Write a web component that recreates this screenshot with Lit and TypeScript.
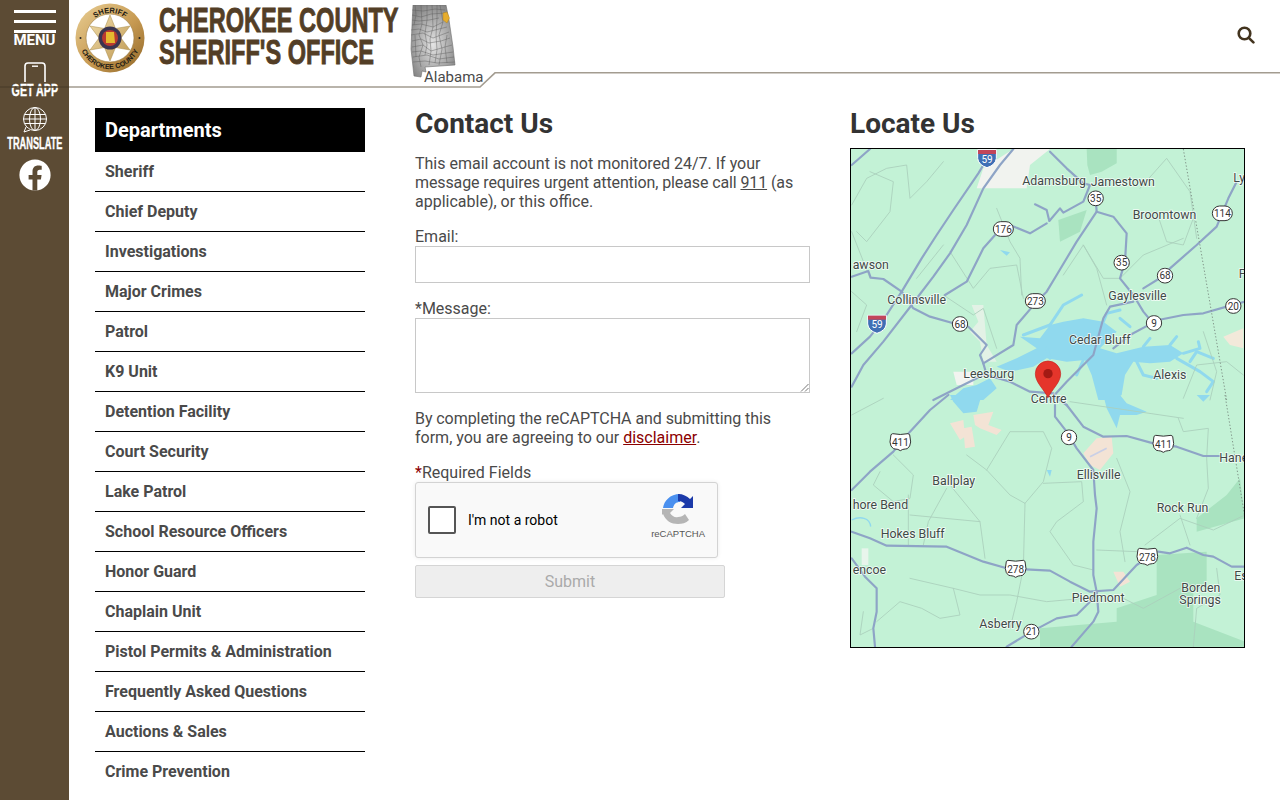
import { LitElement, html, css, svg } from "lit";
import { customElement } from "lit/decorators.js";

const depts = ["Sheriff","Chief Deputy","Investigations","Major Crimes","Patrol","K9 Unit","Detention Facility","Court Security","Lake Patrol","School Resource Officers","Honor Guard","Chaplain Unit","Pistol Permits & Administration","Frequently Asked Questions","Auctions & Sales","Crime Prevention"];

const ROAD = "#8ea4c6";
const THIN = "#aacfbc";
const LAKE = "#90d9ee";

/* Coordinates are in the 3x space of the map, split in an upper and a lower half. */
const roadsA = [
  "M5 625L60 575L100 525L155 440L215 340L260 270L310 195L385 85L400 60",
  "M5 725L40 660L100 590L185 480L250 395L300 325L350 240L400 130L450 60L490 12",
  "M5 60L60 12",
  "M5 395L55 378L62 398L100 402L155 440L190 490L240 515L310 535",
  "M285 450L350 410L400 310L440 265",
  "M480 240L540 265L590 235",
  "M555 178L590 195L598 228L630 190L640 203L700 170L720 120L700 115L650 70L600 20",
  "M737 160L740 200L680 290L620 390L590 440L560 470L500 540L490 600L400 655L390 630L410 600L355 545",
  "M740 200L790 215L830 265L825 350L810 400L850 450L880 500L905 530",
  "M1160 110L1135 160L1100 245L1040 300L960 370L945 390L880 430",
  "M905 535L840 570L790 610",
  "M850 470L780 485L760 520L730 630L650 710L600 765",
  "M925 525L1000 510L1060 505L1130 485L1185 470",
  "M400 655L410 690L480 710L540 740L610 745",
  "M250 765L320 730L400 690",
];
const roadsB = [
  "M5 285L60 230L130 170L180 110L240 45L295 0",
  "M650 30L700 95L760 125L830 123L910 145L980 155L1060 183L1110 183",
  "M615 30L615 65L650 110L680 160L730 225L735 300L740 340L730 440L730 540L740 590",
  "M5 410L60 430L110 452L290 455L400 500L470 520L600 527L660 560L720 590L790 585L860 510L890 490",
  "M925 470L960 475L1010 458L1060 480L1090 485L1145 515L1185 515",
  "M470 755L545 710L620 670L680 660L720 620L740 590",
  "M740 590L745 650L730 680L665 755",
  "M5 490L45 545L80 580L80 650L70 700L75 755",
  "M615 5L650 30",
];
const thinA = [
  "M5 180L50 100L110 70L170 60L180 160L230 110L280 50",
  "M60 80L130 110L120 200L50 290L20 260",
  "M5 260L60 400",
  "M300 320L370 430L420 370L500 360L520 460",
  "M280 450L370 510L400 490L440 610",
  "M640 390L700 300L760 400L810 400",
  "M700 300L740 370L770 480",
  "M810 400L880 330L1000 280",
  "M870 130L950 40L1020 140L1040 280",
  "M920 200L950 290L1000 300L1030 220",
  "M1060 560L1100 680L1080 765",
  "M1000 760L1040 660L1130 650L1180 690",
  "M440 190L480 290L510 340L515 450",
  "M280 300L200 400",
  "M5 440L50 480L20 560",
];
const thinB = [
  "M5 60L100 10",
  "M130 180L190 240L180 310L130 320L70 270L90 230",
  "M180 360L390 380L405 490",
  "M175 300L175 450",
  "M290 280L235 380L220 450",
  "M300 270L390 380",
  "M350 180L410 225L480 300L525 325L580 260L605 160L580 110L480 110L410 225",
  "M525 325L520 520L500 620L480 700",
  "M580 265L695 260L700 320L620 380L600 410L670 510L730 525",
  "M800 190L840 290L810 410L825 500",
  "M885 450L990 370L1090 405L1185 360",
  "M990 360L1020 450",
  "M740 465L860 470",
  "M985 70L1000 110L1075 100L1070 190L1075 280L1040 370",
  "M660 20L1000 70",
  "M180 550L310 580L330 660L270 670L215 640L150 620L80 680",
  "M310 580L390 600L480 600L590 620L700 610",
  "M820 610L880 640L990 580",
  "M40 650L30 720L70 700",
  "M1100 520L1110 600L1040 640L1030 755",
];
const lakeArms = [
  "M600 540L640 480L695 450",
  "M600 540L520 570",
  "M760 530L770 505L810 495",
  "M810 520L840 545",
  "M1000 625L1050 610L1045 590",
  "M980 640L1050 680L1090 710L1070 740",
  "M1020 650L1040 620L1090 640",
  "M880 605L900 580",
  "M960 600L980 575",
  "M860 650L880 690L920 700",
  "M700 645L680 690",
  "M600 640L590 610",
];

const labelsA: [string, number, number][] = [
  ["Adamsburg",517,120],["Jamestown",722,122],["Ly",1150,110],["Broomtown",848,222],["awson",8,372],
  ["Gaylesville",775,464],["Collinsville",112,476],["Cedar Bluff",657,596],["Leesburg",340,700],["Alexis",910,702],["P",1166,400],
];
const labelsB: [string, number, number][] = [
  ["Centre",542,23],["Hane",1108,200],["Ballplay",247,270],["hore Bend",8,342],["Hokes Bluff",92,428],["Rock Run",920,350],
  ["Ellisville",680,251],["encoe",8,537],["Borden",994,590],["Springs",988,626],["Piedmont",665,622],["Asberry",388,700],["Es",1153,556],
];
const roundA: [string, number, number, number][] = [
  ["35",737,160,46],["176",460,252,60],["114",1117,205,60],["35",815,353,46],["68",945,392,46],["273",556,468,60],["68",330,537,46],["9",912,534,46],["20",1150,483,46],
];
const roundB: [string, number, number, number][] = [["9",657,127,46],["21",544,710,46]];
const usB: [string, number, number][] = [["411",151,143],["411",940,148],["278",497,523],["278",892,487]];
const iA: [number, number][] = [[411,40],[81,537]];

const lines = (list: string[], color: string, w: number) =>
  list.map((d) => svg`<path d="${d}" fill="none" stroke="${color}" stroke-width="${w}" stroke-linejoin="round" stroke-linecap="round"/>`);
const words = (list: [string, number, number][]) =>
  list.map((l) => svg`<text class="l" x="${l[1]}" y="${l[2]}">${l[0]}</text>`);
const rounds = (list: [string, number, number, number][]) =>
  list.map((s) => svg`<rect x="${s[1] - s[3] / 2}" y="${s[2] - 22}" width="${s[3]}" height="44" rx="22" fill="#fff" stroke="#333" stroke-width="3"/><text class="s" x="${s[1]}" y="${s[2] + 11}">${s[0]}</text>`);

@customElement("map-view")
class MapView extends LitElement {
  static styles = css`
    :host{display:block;width:395px;height:500px;box-sizing:border-box;border:1px solid #000;overflow:hidden}
    svg{display:block}
    .l{font:37px Roboto,sans-serif;fill:#3f4a47;paint-order:stroke;stroke:#fff;stroke-opacity:.8;stroke-width:5px}
    .s{font:30px Roboto,sans-serif;text-anchor:middle;fill:#333}
    .w{fill:#fff}
  `;
  render() {
    return html`<svg width="393" height="498" viewBox="0 0 393 498">
      <rect width="393" height="498" fill="#c3f2d6"/>
      <g transform="translate(-1 -4) scale(.33333)">
        <path d="M380 130L530 130L540 60L600 12L490 12L400 70Z" fill="#f1f3ef"/>
        <path d="M710 12H800V55L755 80L720 90L712 60Z" fill="#a9e3c0"/>
        <path d="M625 225L710 195L690 260L630 290Z" fill="#a9e3c0"/>
        <path d="M1120 575L1180 550V610L1140 600Z" fill="#f2e9da"/>
        <path d="M365 480L400 480L410 600L440 650L400 650L390 590L360 560L385 530Z" fill="#e3f2e6"/>
        <path d="M310 680H370V720H320Z" fill="#f2f4f0"/>
        <path d="M500 640L560 610L510 575L570 580L600 540L640 530L700 520L760 530L800 560L750 610L800 625L880 605L960 600L1000 625L960 650L900 655L850 650L825 690L815 750L790 765L745 765L725 690L705 645L650 650L590 640L550 665L480 680L440 665Z" fill="${LAKE}"/>
        ${lines(lakeArms, LAKE, 9)}
        <path d="M300 765L340 730L380 720L420 700L440 730L400 765Z" fill="${LAKE}"/>
        <path d="M450 315L480 322L470 332Z" fill="${LAKE}"/>
        ${lines(thinA, THIN, 2.6)}
        ${lines(roadsA, ROAD, 6.5)}
        <path d="M1000 12L1130 765" fill="none" stroke="#7f9488" stroke-width="3" stroke-dasharray="4 6"/>
      </g>
      <g transform="translate(-1 246) scale(.33333)">
        <path d="M300 85L340 75L345 125L330 135ZM370 60L430 50L415 90L455 105L440 120L390 100L375 90ZM340 100L365 95L375 155L345 160ZM700 175L740 130L785 125L790 175L750 225L720 210Z" fill="#f3e3d5"/>
        <path d="M720 185L770 160" stroke="#c9cfe6" stroke-width="5" fill="none"/>
        <path d="M790 530L820 530L840 560L810 575Z" fill="#f3e3d5"/>
        <path d="M35 460H55V510H35Z" fill="#e8f5ec"/>
        <path d="M1040 370L1130 300L1170 250L1185 370L1040 410Z" fill="#a9e3c0"/>
        <path d="M920 480L1070 470V570L1030 590V680L1185 740V755H570V700L800 680V640L920 600Z" fill="#a9e3c0"/>
        <path d="M300 0H395L380 50L340 55L310 20Z" fill="${LAKE}"/>
        <path d="M760 0H810L830 25L890 50L860 60L810 60L800 100L770 40Z" fill="${LAKE}"/>
        <path d="M1040 0L1080 0L1060 20Z" fill="${LAKE}"/>
        <path d="M590 225L605 225L600 245Z" fill="${LAKE}"/>
        ${lines(thinB, THIN, 2.6)}
        ${lines(roadsB, ROAD, 6.5)}
        <path d="M1125 0L1185 370" fill="none" stroke="#7f9488" stroke-width="3" stroke-dasharray="4 6"/>
        <path d="M5 375C30 362 60 368 62 395" fill="none" stroke="${LAKE}" stroke-width="4"/>
      </g>
      <g transform="translate(-1 -4) scale(.33333)">
        ${words(labelsA)}
        ${rounds(roundA)}
        ${iA.map((p) => svg`<path d="M${p[0] - 28} ${p[1] - 26}h56v26q-2 20-28 28q-26-8-28-28Z" fill="#3f6fb5" stroke="#fff" stroke-width="3"/><rect x="${p[0] - 27}" y="${p[1] - 25}" width="54" height="12" fill="#c2465a"/><text class="s w" x="${p[0]}" y="${p[1] + 13}">59</text>`)}
      </g>
      <g transform="translate(-1 246) scale(.33333)">
        ${words(labelsB)}
        ${rounds(roundB)}
        ${usB.map((s) => svg`<path d="M${s[1] - 28} ${s[2] - 24}l5 -3q23 5 46 0l5 3l3 22q-1 14-10 20l-6 1q-8 0-15 5q-7-5-15-5l-6-1q-9-6-10-20Z" fill="#fff" stroke="#333" stroke-width="3"/><text class="s" x="${s[1]}" y="${s[2] + 11}">${s[0]}</text>`)}
      </g>
      <g transform="translate(-1 -4) scale(.33333)">
        <path d="M594 758C580 730 556 712 556 686A38 38 0 0 1 632 686C632 712 608 730 594 758Z" fill="#e5352b" stroke="#c5221f" stroke-width="2"/>
        <circle cx="594" cy="686" r="14" fill="#a31a14"/>
      </g>
    </svg>`;
  }
}

@customElement("app-root")
export class AppRoot extends LitElement {
  static styles = css`
    :host{display:block;height:800px;overflow:hidden;position:relative;font-family:Roboto,sans-serif;color:#4a4a4a;background:#fff}
    .page{display:flex;height:800px}
    .rail{width:69px;flex:none;background:#5c4b34;color:#fff;display:flex;flex-direction:column;align-items:center;padding-top:10px;box-sizing:border-box}
    .bars{width:42px;display:flex;flex-direction:column;gap:7px}
    .bars i{display:block;height:3px;background:#fff}
    .menu{font:700 15px/16px Roboto,sans-serif;margin-top:-1px}
    .narrow{font:700 16px/18px "Liberation Sans",sans-serif;white-space:nowrap;-webkit-text-stroke:.35px #fff}
    .app{transform:scaleX(.667)}
    .tr{transform:scaleX(.577);margin-top:2px}
    .rail svg{display:block;flex:none}
    .phone{margin-top:14px}
    .globe{margin-top:7px}
    .fb{margin-top:6px}
    .main{flex:1;min-width:0;display:flex;flex-direction:column}
    .head{height:72px;flex:none;display:flex;align-items:flex-start;padding-left:6px;position:relative}
    .badge{margin-top:3px;flex:none}
    .title{margin:4px 0 0 14px;width:240px;flex:none;font:700 34.3px/32px "Liberation Sans",sans-serif;color:#533e26;white-space:nowrap;transform:scaleX(.687);transform-origin:0 0;-webkit-text-stroke:.9px #533e26}
    .state{position:relative;margin:5px 0 0 10px;width:47px;height:73px;flex:none}
    .state svg{display:block}
    .state span{position:absolute;left:15px;top:63px;font-size:15px;line-height:18px;color:#4a4a4a;white-space:nowrap}
    .search{position:absolute;right:25px;top:26px}
    .rule{position:absolute;left:0;top:72px;pointer-events:none}
    .cols{display:flex;padding:36px 0 0 26px}
    .nav{width:270px;flex:none}
    .nav h2{margin:0;background:#000;color:#fff;font:700 20px/44px Roboto,sans-serif;padding-left:10px;height:44px}
    .nav a{display:block;height:39px;line-height:39px;padding-left:10px;border-bottom:1px solid #000;font-weight:700;font-size:16px;color:#4a4a4a}
    .nav a:last-child{border-bottom:0}
    .form{width:395px;flex:none;font-size:16px;line-height:19px;margin-left:50px}
    h1{margin:0;font:700 28px/32px Roboto,sans-serif;color:#333}
    p{margin:0}
    .intro{margin-top:14px}
    .tight{letter-spacing:-.11px}
    .tight2{letter-spacing:-.065px}
    .u{text-decoration:underline}
    label{display:block}
    .f1{margin-top:16px}
    .in{height:37px;box-sizing:border-box;border:1px solid #c8c8c8;background:#fff}
    .f2{margin-top:16px}
    .ta{height:75px;box-sizing:border-box;border:1px solid #c8c8c8;position:relative}
    .ta svg{position:absolute;right:0;bottom:0}
    .consent{margin-top:16px}
    .consent a{color:#8b0000;text-decoration:underline}
    .req{margin-top:16px}
    .req b{color:#8b0000;font-weight:400}
    .cap{width:303px;height:76px;box-sizing:border-box;border:1px solid #d3d3d3;border-radius:3px;background:#f9f9f9;box-shadow:0 0 4px rgba(0,0,0,.08);display:flex;align-items:center;padding-left:12px;position:relative}
    .box{width:28px;height:28px;box-sizing:border-box;border:2px solid #555;border-radius:2px;background:#fff}
    .cap span{margin-left:12px;font:14px Roboto,sans-serif;color:#000}
    .logo{position:absolute;right:12px;top:10px;display:flex;flex-direction:column;align-items:center;gap:3px;font:9.5px/12px "Liberation Sans",sans-serif;color:#555}
    .submit{margin-top:7px;width:310px;height:33px;box-sizing:border-box;border:1px solid #d5d5d5;border-radius:2px;background:#eee;color:#aaa;text-align:center;line-height:31px}
    .locate{width:395px;flex:none;margin-left:40px}
    .locate map-view{margin-top:8px}
  `;
  render() {
    return html`<div class="page">
      <aside class="rail">
        <div class="bars"><i></i><i></i><i></i></div>
        <div class="menu">MENU</div>
        <svg class="phone" width="22" height="20" viewBox="0 0 22 20"><path d="M1 20V4a3 3 0 0 1 3-3h14a3 3 0 0 1 3 3v16" fill="none" stroke="#fff" stroke-width="1.6"/><rect x="8" y="3.5" width="6" height="1.4" fill="#fff"/></svg>
        <div class="narrow app">GET APP</div>
        <svg class="globe" width="26" height="26" viewBox="0 0 26 26" fill="none" stroke="#fff" stroke-width="1"><circle cx="13" cy="12" r="11.5"/><ellipse cx="13" cy="12" rx="5.5" ry="11.5"/><path d="M13 .5v23M2.5 7.5h21M1.5 12h23M2.5 16.5h21"/><path d="M4 20l-2 5 6-2" fill="#5c4b34"/></svg>
        <div class="narrow tr">TRANSLATE</div>
        <svg class="fb" width="32" height="32" viewBox="0 0 32 32"><circle cx="16" cy="16" r="15.6" fill="#fff"/><path d="M13.5 31.5V20.6H9.6V16h3.9v-3.4c0-3.9 2.3-6 5.8-6 1.7 0 3.4.3 3.4.3v3.8h-1.9c-1.9 0-2.5 1.2-2.5 2.4V16h4.3l-.7 4.6h-3.6v10.9Z" fill="#5c4b34"/></svg>
      </aside>
      <div class="main">
        <header class="head">
          <svg class="badge" width="70" height="70" viewBox="0 0 70 70">
            <defs>
              <linearGradient id="g" x1="0" y1="0" x2="1" y2="1"><stop offset="0" stop-color="#e9cf95"/><stop offset=".55" stop-color="#c79a52"/><stop offset="1" stop-color="#8f6526"/></linearGradient>
              <linearGradient id="st" x1="0" y1="0" x2="1" y2="1"><stop offset="0" stop-color="#f0dca8"/><stop offset="1" stop-color="#c09a55"/></linearGradient>
            </defs>
            <circle cx="35" cy="35" r="34.5" fill="url(#g)"/><circle cx="35" cy="35" r="24" fill="#fff" stroke="#9b7a3f" stroke-width=".6"/>
            <path d="M35 12L40.5 25.5L55 23L46 35L55 47L40.5 44.5L35 58L29.5 44.5L15 47L24 35L15 23L29.5 25.5Z" fill="url(#st)" stroke="#a78a49" stroke-width=".5"/>
            <circle cx="35" cy="35" r="11.5" fill="#3a3550"/><circle cx="35" cy="35" r="8" fill="#b93a30"/><path d="M31 29h8l1 11h-9Z" fill="#e5b92f"/>
            <circle cx="5.5" cy="35" r="1" fill="#222"/><circle cx="64.5" cy="35" r="1" fill="#222"/>
            <path id="a1" d="M10 35A25 25 0 0 1 60 35" fill="none"/>
            <text font-family="Liberation Sans" font-weight="700" font-size="7.5" fill="#1d1a14" text-anchor="middle"><textPath href="#a1" startOffset="50%">SHERIFF</textPath></text>
            <path id="a2" d="M4 35A31 31 0 0 0 66 35" fill="none"/>
            <text font-family="Liberation Sans" font-weight="700" font-size="7" fill="#1d1a14" text-anchor="middle"><textPath href="#a2" startOffset="50%">CHEROKEE COUNTY</textPath></text>
          </svg>
          <div class="title">CHEROKEE COUNTY<br>SHERIFF'S OFFICE</div>
          <div class="state">
            <svg width="47" height="73" viewBox="0 0 47 73">
              <defs><radialGradient id="al" cx=".5" cy=".55" r=".6"><stop offset="0" stop-color="#e4e4e4"/><stop offset="1" stop-color="#858585"/></radialGradient></defs>
              <path d="M4 0L37 0L40 15L44 42L46 60L16 62L17 67L13 66L12 72L5 71L2 44L3 20Z" fill="url(#al)" stroke="#6d6d6d" stroke-width=".6"/>
              <path d="M3 5L14 6L26 4L36 5M3 10L12 12L22 9L37 8M3 15L10 16L20 15L30 13M3 20L12 19L24 22L34 17M2 25L10 24L18 27L30 24L38 22M2 30L14 28L24 33L40 27M3 36L12 34L20 38L32 36L41 33M3 42L14 40L22 46L43 40M3 47L12 46L24 50L44 47M4 52L18 50L30 54L45 52M4 57L16 56L28 58L46 57M6 0L7 10L5 20M12 0L13 19L10 30L14 40L10 52L12 62M18 0L18 15L16 28L18 40L16 50M23 0L24 22L21 34L22 46L20 60M28 0L28 14L27 30L28 45L26 58M31 0L34 17L30 30L33 44L30 60M38 30L36 42L38 58M6 30L7 52" fill="none" stroke="#5f5f5f" stroke-width=".45"/>
              <path d="M34 8L38 7L40.5 13L38 18L34 15Z" fill="#e6ad2e" stroke="#a87c14" stroke-width=".4"/>
            </svg>
            <span>Alabama</span>
          </div>
          <svg class="search" width="18" height="18" viewBox="0 0 18 18" fill="none" stroke="#43341f" stroke-width="2.6"><circle cx="7.5" cy="7.5" r="5.8"/><path d="M11.8 11.8L16.4 16.4" stroke-linecap="round"/></svg>
        </header>
        <div class="cols">
          <nav class="nav"><h2>Departments</h2>${depts.map((d) => html`<a>${d}</a>`)}</nav>
          <section class="form">
            <h1>Contact Us</h1>
            <p class="intro">This email account is not monitored 24/7. If your <span class="tight">message requires urgent attention, please call <span class="u">911</span> (as</span> applicable), or this office.</p>
            <label class="f1">Email:</label><div class="in"></div>
            <label class="f2">*Message:</label>
            <div class="ta"><svg width="10" height="10" viewBox="0 0 10 10" stroke="#777" stroke-width="1"><path d="M2 9.5L9.5 2M6 9.5L9.5 6"/></svg></div>
            <p class="consent"><span class="tight2">By completing the reCAPTCHA and submitting this</span> form, you are agreeing to our <a>disclaimer</a>.</p>
            <p class="req"><b>*</b>Required Fields</p>
            <div class="cap"><div class="box"></div><span>I'm not a robot</span>
              <div class="logo"><svg width="32" height="32" viewBox="0 0 32 32"><path d="M1 15C2 8 8 1 18 1L18 9C14 9 12 11 11 15Z" fill="#4a90ef"/><path d="M16 1C21 1 25 3 28 6L31 3V15H19L23 11C21 9 19 8 16 8Z" fill="#1c3aa9"/><path d="M0 16H12L8 20C10 23 13 25 16 24C19 24 21 23 23 21L27 27C24 30 20 31 16 31C9 31 4 28 1 21L0 22Z" fill="#b5b5b5"/></svg>reCAPTCHA</div>
            </div>
            <div class="submit">Submit</div>
          </section>
          <section class="locate"><h1>Locate Us</h1><map-view></map-view></section>
        </div>
      </div>
      <svg class="rule" width="1280" height="18" viewBox="0 0 1280 18" fill="none" stroke-width="1.6"><path d="M0 15H69" stroke="#4e3f2b"/><path d="M69 15H480L495 .8H1280" stroke="#a39c90"/></svg>
    </div>`;
  }
}
